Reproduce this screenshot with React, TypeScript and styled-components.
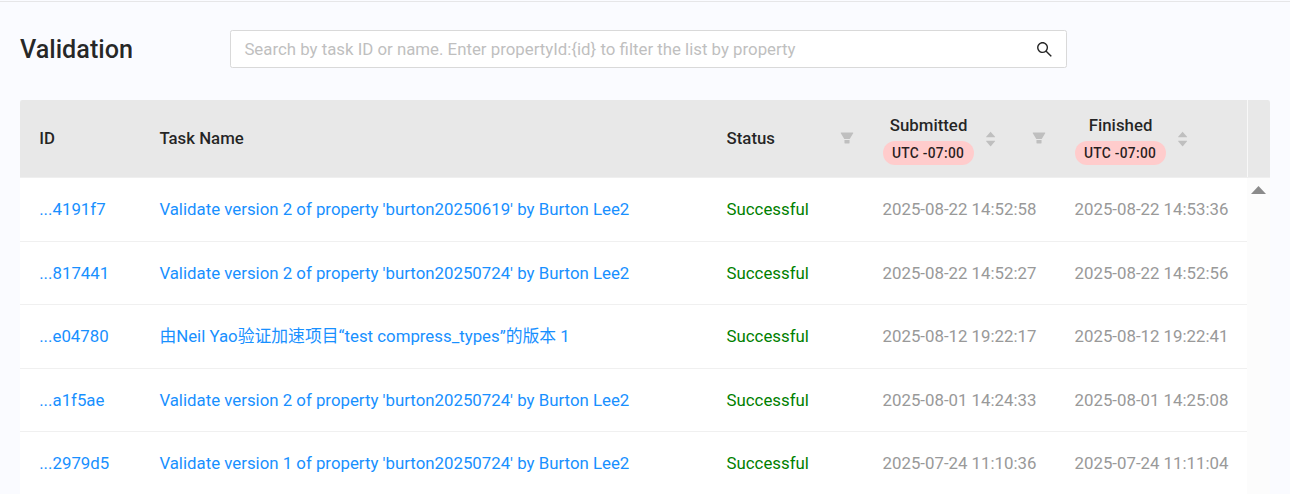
import React from "react";
import styled, { createGlobalStyle } from "styled-components";
import { AiOutlineSearch, AiFillFilter, AiFillCaretUp, AiFillCaretDown } from "react-icons/ai";

const GlobalStyle = createGlobalStyle`
  * { box-sizing: border-box; }
  body {
    margin: 0;
    height: 494px;
    overflow: hidden;
    background: #fafbff;
    color: rgba(0, 0, 0, 0.85);
    font-family: Roboto, "Noto Sans CJK SC", sans-serif;
    font-size: 16.82px;
  }
`;

const Page = styled.main`
  height: 494px;
  padding: 28px 20px 0;
  border-top: 1px solid #fafbff;
  box-shadow: inset 0 1px 0 #e6e6e8;
  overflow: hidden;
`;

const TopBar = styled.header`
  display: flex;
  align-items: center;
  height: 40px;
`;

const Title = styled.h1`
  width: 210px;
  margin: 0;
  padding-top: 2px;
  font-size: 25.2px;
  line-height: 38px;
  font-weight: 500;
`;

const SearchBox = styled.label`
  display: flex;
  align-items: center;
  justify-content: space-between;
  width: 837px;
  height: 38px;
  padding: 0 12.4px 0 13.4px;
  background: #fff;
  border: 1px solid #d9d9d9;
  border-radius: 2.4px;
`;

const SearchInput = styled.input`
  flex: 1;
  padding: 0;
  border: 0;
  outline: 0;
  background: transparent;
  font: inherit;
  &::placeholder { color: #bfbfbf; opacity: 1; }
`;

const Table = styled.section`
  display: flex;
  flex-direction: column;
  margin-top: 31px;
  height: 400px;
`;

const TableHead = styled.div`
  display: flex;
  flex: none;
  height: 78px;
  background: #e8e8e8;
  border-bottom: 1px solid #efefef;
  border-radius: 2.4px 2.4px 0 0;
`;

const Columns = styled.div`
  display: grid;
  grid-template-columns: 120.2px 567.2px 156px 192px 191.6px;
  width: 1227px;
  align-items: center;
`;

const HeadCell = styled.div`
  display: flex;
  align-items: center;
  justify-content: space-between;
  padding: 0 0 1.4px 19.2px;
  font-weight: 500;
`;

const HeadGutter = styled.div`
  width: 23px;
  border-left: 1px solid #f8f8f8;
`;

const Sorter = styled.div`
  display: flex;
  align-items: center;
  gap: 10px;
`;

const ZonedTitle = styled.div`
  display: flex;
  flex-direction: column;
  align-items: center;
  line-height: 26px;
  padding-top: 0.4px;
`;

const ZonedLabel = styled.span`
  padding-left: 1px;
`;

const Zone = styled.span`
  width: 91px;
  height: 24px;
  margin-top: 3px;
  padding-top: 0.5px;
  border-radius: 12px;
  background: #ffcccc;
  text-align: center;
  font-size: 13.8px;
  letter-spacing: 0.28px;
  line-height: 24px;
  font-weight: 500;
`;

const Carets = styled.span`
  display: flex;
  flex-direction: column;
  width: 13.2px;
  padding-top: 3px;
  color: #bfbfbf;
  svg + svg { margin-top: -4px; }
`;

const FilterIcon = styled(AiFillFilter)`
  margin-right: 8.6px;
  color: #bfbfbf;
`;

const TableBody = styled.div`
  display: flex;
  flex: 1;
`;

const Rows = styled.div`
  width: 1227px;
  padding-top: 0.5px;
  background: #fff;
`;

const Row = styled(Columns)`
  height: 63.45px;
  border-bottom: 1px solid #f0f0f0;
`;

const Cell = styled.div<{ $tone: string }>`
  padding-left: 19.2px;
  white-space: nowrap;
  line-height: 25px;
  color: ${(p) => p.$tone};
`;

const ScrollTrack = styled.div`
  display: flex;
  width: 23px;
  padding: 8px 0 0 3px;
  background: #fcfcfc;
`;

const LINK = "#1890ff";
const OK = "#008000";
const MUTED = "#999999";

const tasks = [
  ["...4191f7", "Validate version 2 of property 'burton20250619' by Burton Lee2", "2025-08-22 14:52:58", "2025-08-22 14:53:36"],
  ["...817441", "Validate version 2 of property 'burton20250724' by Burton Lee2", "2025-08-22 14:52:27", "2025-08-22 14:52:56"],
  ["...e04780", "由Neil Yao验证加速项目“test compress_types”的版本 1", "2025-08-12 19:22:17", "2025-08-12 19:22:41"],
  ["...a1f5ae", "Validate version 2 of property 'burton20250724' by Burton Lee2", "2025-08-01 14:24:33", "2025-08-01 14:25:08"],
  ["...2979d5", "Validate version 1 of property 'burton20250724' by Burton Lee2", "2025-07-24 11:10:36", "2025-07-24 11:11:04"],
];

function TimeHeading({ label }: { label: string }) {
  return (
    <Sorter>
      <ZonedTitle>
        <ZonedLabel>{label}</ZonedLabel>
        <Zone>UTC -07:00</Zone>
      </ZonedTitle>
      <Carets>
        <AiFillCaretUp size={13.2} />
        <AiFillCaretDown size={13.2} />
      </Carets>
    </Sorter>
  );
}

export default function App() {
  return (
    <Page>
      <GlobalStyle />
      <TopBar>
        <Title>Validation</Title>
        <SearchBox>
          <SearchInput placeholder="Search by task ID or name. Enter propertyId:{id} to filter the list by property" />
          <AiOutlineSearch size={18.8} />
        </SearchBox>
      </TopBar>
      <Table>
        <TableHead>
          <Columns>
            <HeadCell>ID</HeadCell>
            <HeadCell>Task Name</HeadCell>
            <HeadCell>Status<FilterIcon size={16} /></HeadCell>
            <HeadCell><TimeHeading label="Submitted" /><FilterIcon size={16} /></HeadCell>
            <HeadCell><TimeHeading label="Finished" /></HeadCell>
          </Columns>
          <HeadGutter />
        </TableHead>
        <TableBody>
          <Rows>
            {tasks.map(([id, name, submitted, finished]) => (
              <Row key={id}>
                <Cell $tone={LINK}>{id}</Cell>
                <Cell $tone={LINK}>{name}</Cell>
                <Cell $tone={OK}>Successful</Cell>
                <Cell $tone={MUTED}>{submitted}</Cell>
                <Cell $tone={MUTED}>{finished}</Cell>
              </Row>
            ))}
          </Rows>
          <ScrollTrack>
            <svg width="17" height="8" viewBox="0 0 17 8">
              <path d="M8.5 0L16 8H1Z" fill="#8b8b8b" />
            </svg>
          </ScrollTrack>
        </TableBody>
      </Table>
    </Page>
  );
}
